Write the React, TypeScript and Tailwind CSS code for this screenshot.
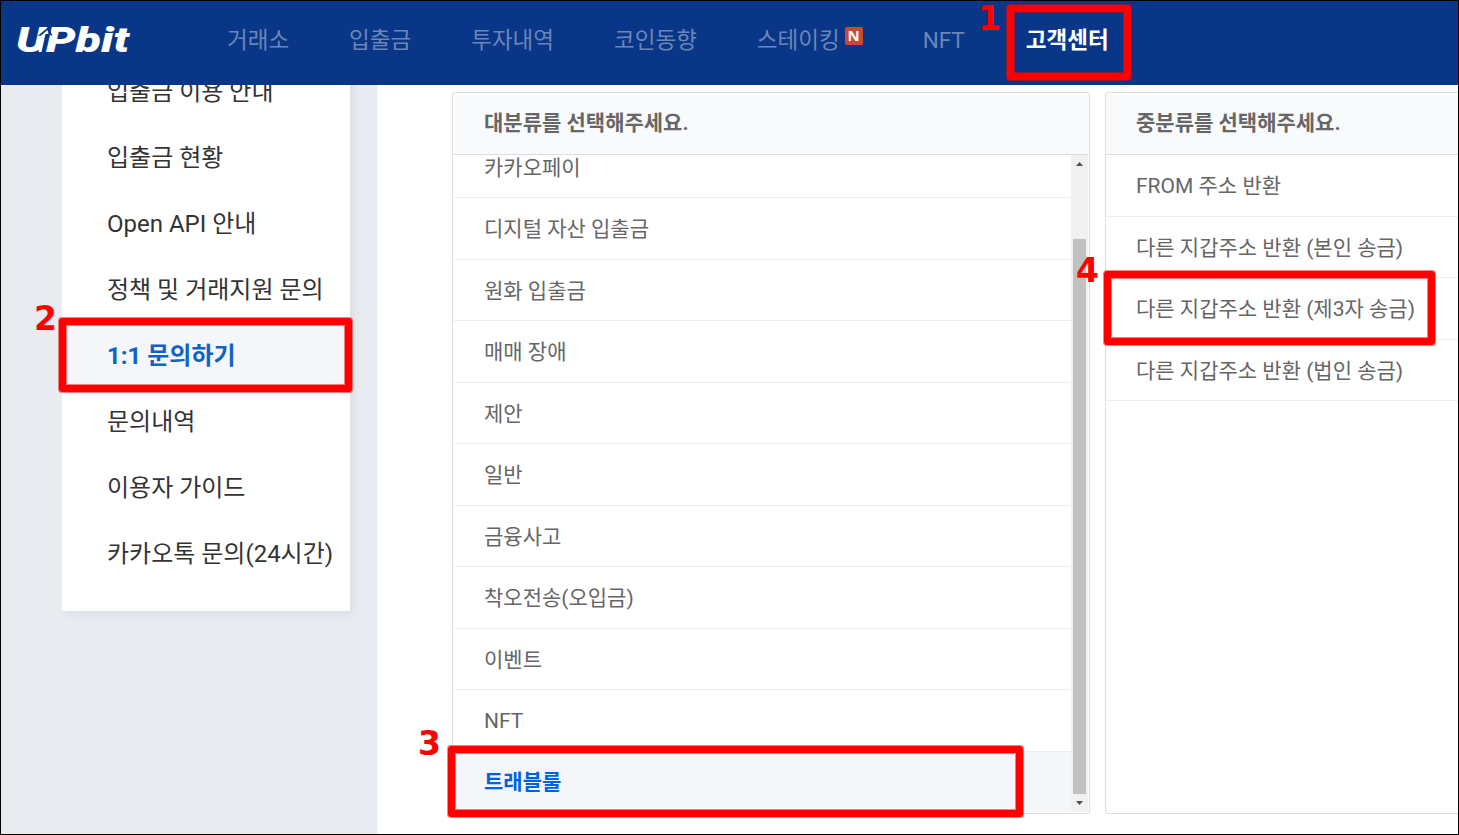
import * as React from "react";

const NAV_ITEMS = [
  { label: "거래소" },
  { label: "입출금" },
  { label: "투자내역" },
  { label: "코인동향" },
  { label: "스테이킹", isNew: true },
  { label: "NFT" },
  { label: "고객센터", active: true }
];

const SIDE_ITEMS = [
  "입출금 이용 안내",
  "입출금 현황",
  "Open API 안내",
  "정책 및 거래지원 문의",
  "1:1 문의하기",
  "문의내역",
  "이용자 가이드",
  "카카오톡 문의(24시간)"
];

const MAIN_CATEGORIES = [
  "카카오페이",
  "디지털 자산 입출금",
  "원화 입출금",
  "매매 장애",
  "제안",
  "일반",
  "금융사고",
  "착오전송(오입금)",
  "이벤트",
  "NFT",
  "트래블룰"
];

const SUB_CATEGORIES = [
  "FROM 주소 반환",
  "다른 지갑주소 반환 (본인 송금)",
  "다른 지갑주소 반환 (제3자 송금)",
  "다른 지갑주소 반환 (법인 송금)"
];

function Logo() {
  return (
    <svg width="120" height="48" viewBox="0 0 120 48" className="shrink-0">
      <text
        x="-1"
        y="36"
        textLength="113"
        lengthAdjust="spacingAndGlyphs"
        className="fill-white font-['Roboto',sans-serif] text-[35px] font-black italic"
      >
        UPbit
      </text>
      {/* arrow cut between the U and the P */}
      <path
        d="M20.5 20 L31.5 11 L35.5 20 L30.5 18 L25.5 36 L22.5 36 L27.5 19 Z"
        fill="#093687"
      />
      <path
        d="M23.5 20 L30.5 14 L31.5 18 L28.5 18 L24.5 36 L21.5 36 L25.5 19 Z"
        fill="#fff"
      />
    </svg>
  );
}

function Header() {
  return (
    <header className="flex h-[84px] shrink-0 items-start bg-[#093687] pl-4">
      <div className="mt-[15px] w-[210px]">
        <Logo />
      </div>
      <nav className="mt-[23px] flex gap-[60px] text-[22.5px] leading-[33px]">
        {NAV_ITEMS.map((item) => (
          <div
            key={item.label}
            className={
              item.active
                ? "ml-px flex font-bold text-white"
                : "flex text-[#6b86b7]"
            }
          >
            {item.label}
            {item.isNew && (
              <span className="mt-[3px] ml-[5px] flex size-[18px] items-center justify-center rounded-[2px] bg-[#c84a31] pb-0.5 font-['Open_Sans',sans-serif] text-[15px] leading-none font-bold text-white">
                N
              </span>
            )}
          </div>
        ))}
      </nav>
    </header>
  );
}

function Sidebar() {
  return (
    <aside className="w-[376px] shrink-0 overflow-hidden bg-[#e8ebf0] pl-[61px]">
      <ul className="-mt-[27px] w-[288px] bg-white pb-[25px] text-[24px] text-[#333] shadow-[4px_4px_8px_rgba(0,0,0,0.05)]">
        {SIDE_ITEMS.map((item) => (
          <li
            key={item}
            className={
              item === "1:1 문의하기"
                ? "flex h-[66px] items-center bg-[#f4f6fa] pt-0.5 pl-[45px] font-bold whitespace-nowrap text-[#1261c4]"
                : "flex h-[66px] items-center pt-0.5 pl-[45px] whitespace-nowrap"
            }
          >
            {item}
          </li>
        ))}
      </ul>
    </aside>
  );
}

function ScrollBar() {
  return (
    <div className="flex w-[17px] shrink-0 flex-col items-center justify-between bg-[#f1f1f1]">
      <svg width="17" height="17" viewBox="0 0 17 17">
        <path d="M5 11 L8.5 7 L12 11 Z" fill="#505050" />
      </svg>
      <div className="mt-[67px] w-[13px] flex-1 bg-[#c1c1c1]" />
      <svg width="17" height="18" viewBox="0 0 17 18">
        <path d="M5 7 L8.5 11 L12 7 Z" fill="#505050" />
      </svg>
    </div>
  );
}

interface CategoryPanelProps {
  title: string;
  className: string;
  children: React.ReactNode;
}

function CategoryPanel({ title, className, children }: CategoryPanelProps) {
  return (
    <section
      className={`flex h-[722px] shrink-0 flex-col rounded-[3px] border border-[#dcdde1] py-px ${className}`}
    >
      <h2 className="flex h-[61px] shrink-0 items-center border-b border-[#dadee3] bg-[#f9fafc] pl-[30px] font-bold">
        {title}
      </h2>
      <div className="flex min-h-0 flex-1 overflow-hidden">{children}</div>
    </section>
  );
}

function CategoryRow({ label, active }: { label: string; active?: boolean }) {
  return (
    <li
      className={
        active
          ? "flex h-[61.5px] items-center bg-[#f4f6fa] pt-px pl-[30px] font-bold text-[#0062df]"
          : "flex h-[61.5px] items-center border-b border-[#ededef] pt-[3px] pl-[30px]"
      }
    >
      {label}
    </li>
  );
}

interface MarkerProps {
  step: number;
  box: string;
  digit: string;
}

// Red frame with softened edges and its step number
function Marker({ step, box, digit }: MarkerProps) {
  return (
    <>
      <div
        className={`absolute rounded-[3px] border-[7px] border-[#f00] shadow-[0_0_0_1px_rgba(255,0,0,0.5),inset_0_0_0_1px_rgba(255,0,0,0.5)] ${box}`}
      />
      <span
        className={`absolute font-['DejaVu_Sans',sans-serif] text-[33px] leading-[34px] font-bold text-[#f00] ${digit}`}
      >
        {step}
      </span>
    </>
  );
}

export default function App() {
  return (
    <div className="relative flex h-[835px] w-[1459px] flex-col overflow-hidden border border-black bg-white font-['Roboto','Noto_Sans_CJK_KR',sans-serif]">
      <Header />
      <div className="flex min-h-0 flex-1">
        <Sidebar />
        <main className="flex min-w-0 flex-1 gap-[15px] overflow-hidden pt-[7px] pl-[75px] text-[21px] text-[#666]">
          <CategoryPanel
            title="대분류를 선택해주세요."
            className="w-[638px] px-px"
          >
            <ul className="-mt-[18.5px] flex-1">
              {MAIN_CATEGORIES.map((label) => (
                <CategoryRow
                  key={label}
                  label={label}
                  active={label === "트래블룰"}
                />
              ))}
            </ul>
            <ScrollBar />
          </CategoryPanel>
          <CategoryPanel title="중분류를 선택해주세요." className="w-[638px]">
            <ul className="flex-1">
              {SUB_CATEGORIES.map((label) => (
                <CategoryRow key={label} label={label} />
              ))}
            </ul>
          </CategoryPanel>
        </main>
      </div>

      <Marker
        step={1}
        box="left-[1006px] top-[4px] h-[75px] w-[124px]"
        digit="left-[977px] top-px"
      />
      <Marker
        step={2}
        box="left-[58px] top-[317px] h-[74px] w-[293px]"
        digit="left-[33px] top-[301px]"
      />
      <Marker
        step={3}
        box="left-[447px] top-[745px] h-[71px] w-[575px]"
        digit="left-[417px] top-[726px]"
      />
      <Marker
        step={4}
        box="left-[1103px] top-[270px] h-[74px] w-[331px]"
        digit="left-[1075px] top-[253px]"
      />
    </div>
  );
}
